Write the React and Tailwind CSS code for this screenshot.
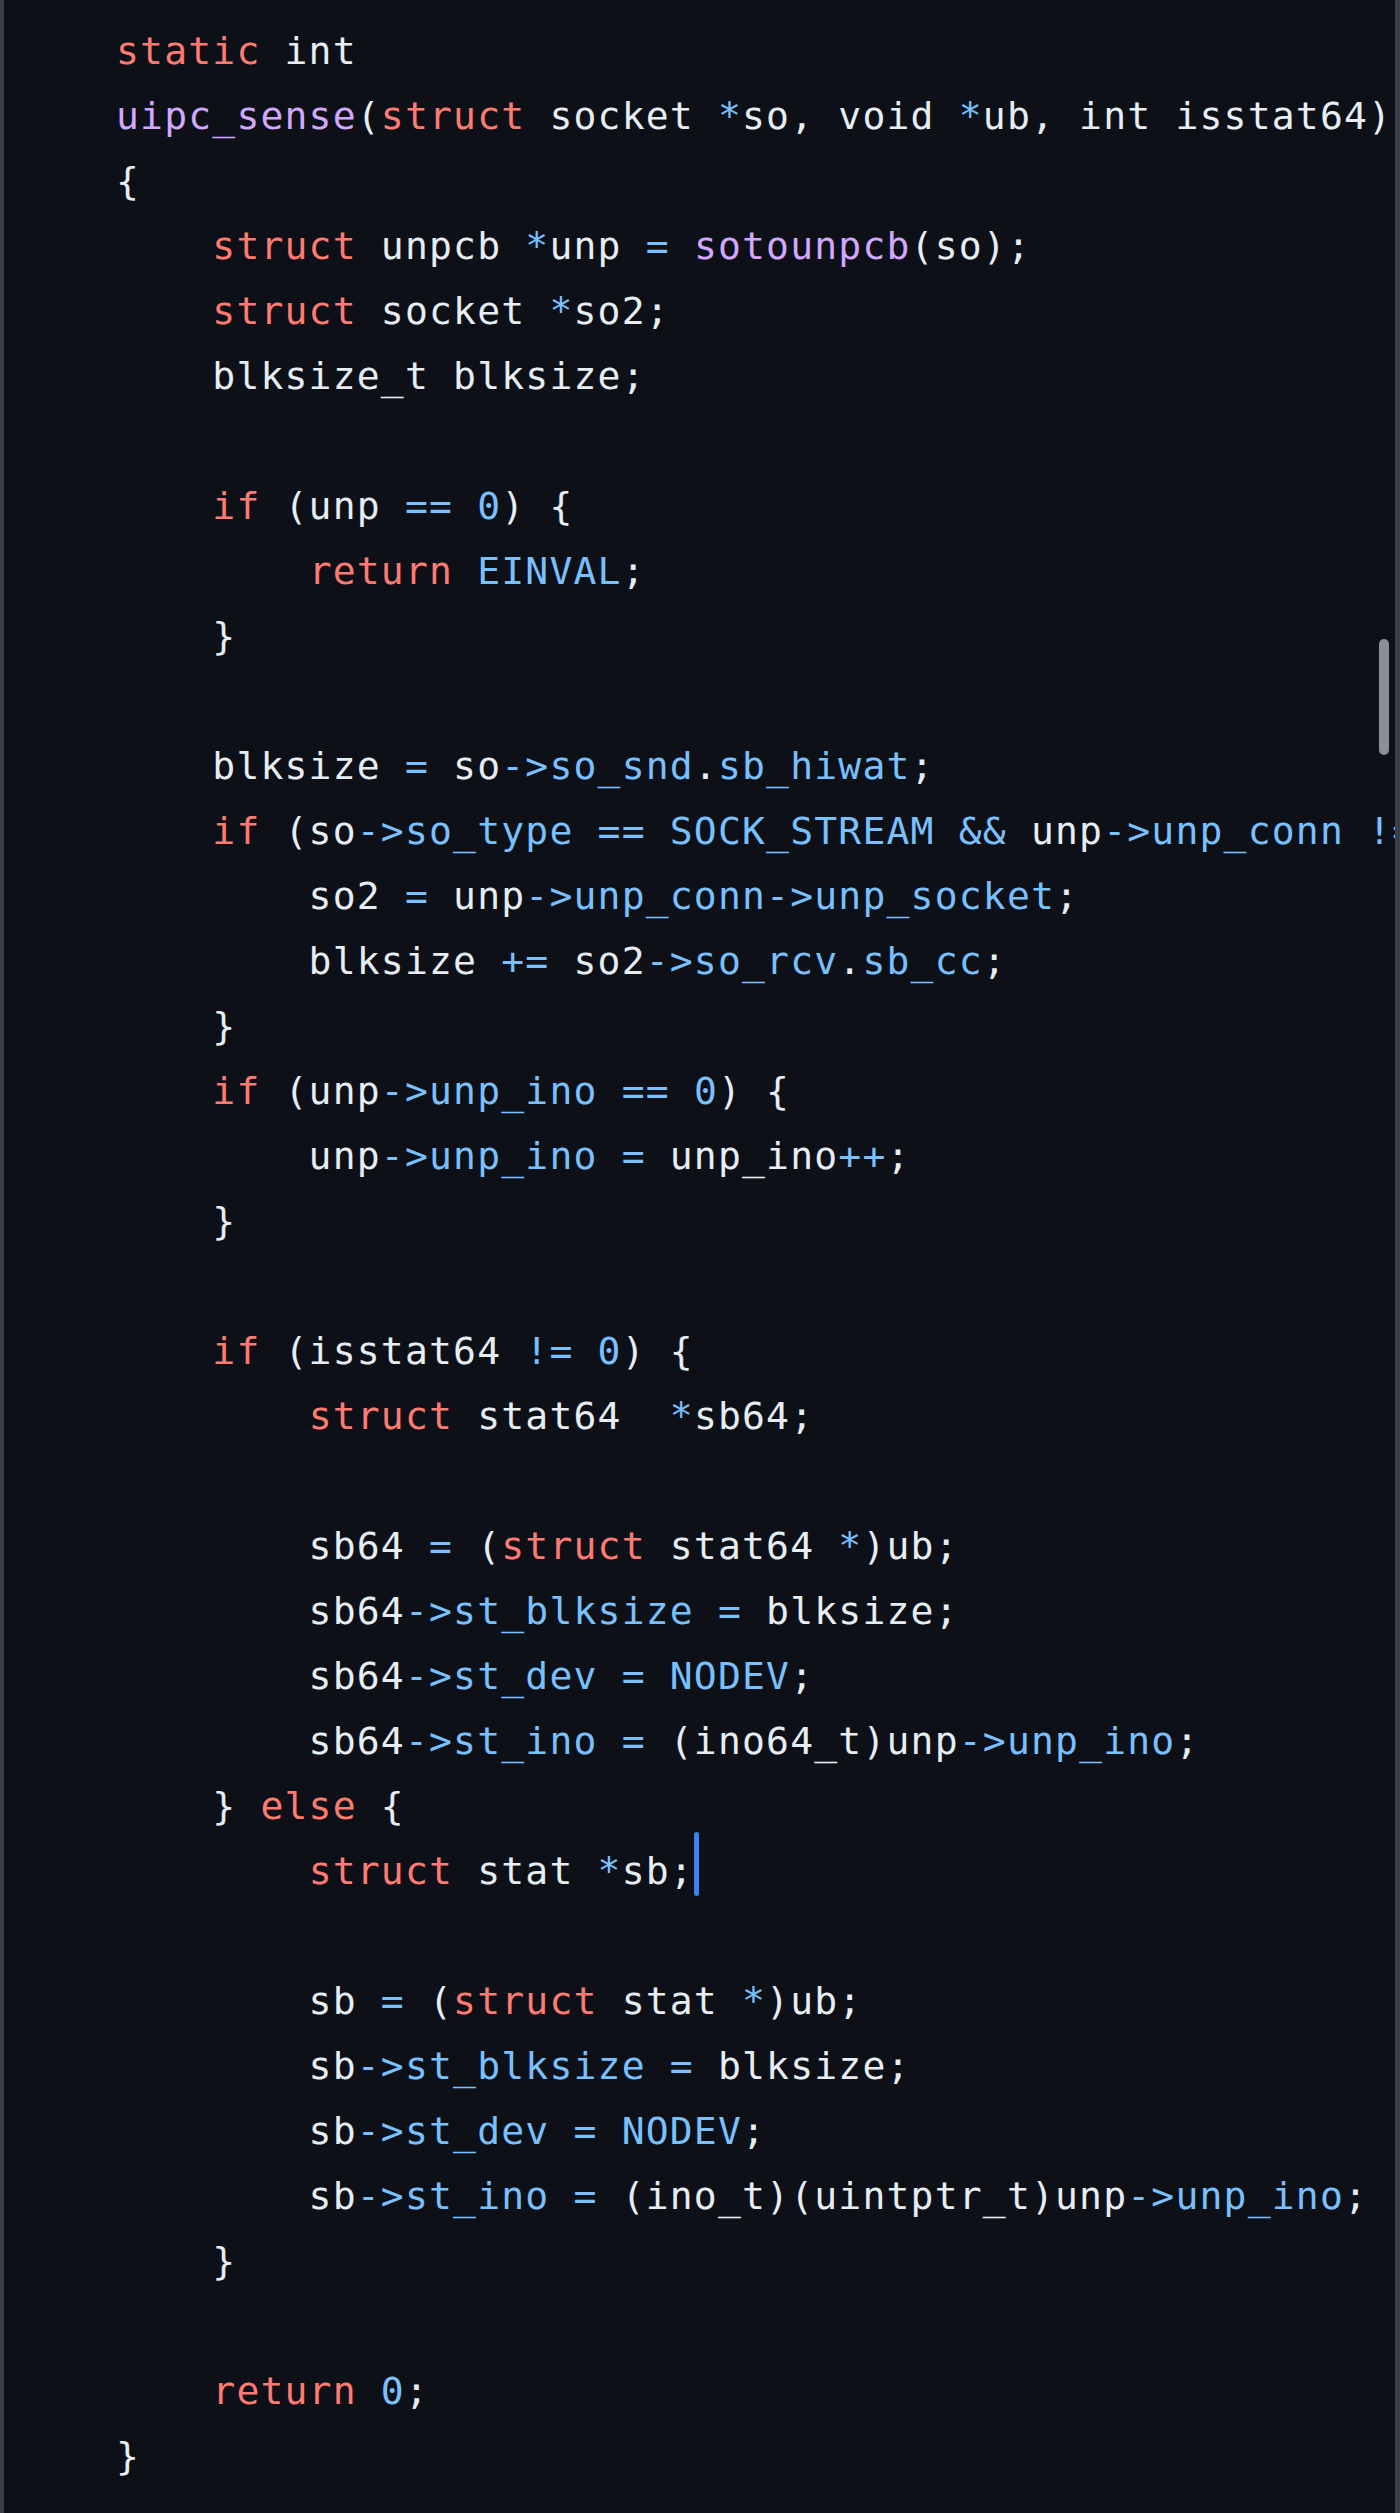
import React from "react";

const K = (t) => ({ t, c: "k" });
const F = (t) => ({ t, c: "f" });
const B = (t) => ({ t, c: "b" });
const CURSOR = { cursor: true };

const lines = [
  [K("static"), " int"],
  [F("uipc_sense"), "(", K("struct"), " socket ", B("*"), "so, void ", B("*"), "ub, int isstat64)"],
  ["{"],
  ["    ", K("struct"), " unpcb ", B("*"), "unp ", B("="), " ", F("sotounpcb"), "(so);"],
  ["    ", K("struct"), " socket ", B("*"), "so2;"],
  ["    blksize_t blksize;"],
  [],
  ["    ", K("if"), " (unp ", B("=="), " ", B("0"), ") {"],
  ["        ", K("return"), " ", B("EINVAL"), ";"],
  ["    }"],
  [],
  ["    blksize ", B("="), " so", B("->so_snd"), ".", B("sb_hiwat"), ";"],
  ["    ", K("if"), " (so", B("->so_type"), " ", B("=="), " ", B("SOCK_STREAM"), " ", B("&&"), " unp", B("->unp_conn"), " ", B("!="), " ", B("0"), ") {"],
  ["        so2 ", B("="), " unp", B("->unp_conn->unp_socket"), ";"],
  ["        blksize ", B("+="), " so2", B("->so_rcv"), ".", B("sb_cc"), ";"],
  ["    }"],
  ["    ", K("if"), " (unp", B("->unp_ino"), " ", B("=="), " ", B("0"), ") {"],
  ["        unp", B("->unp_ino"), " ", B("="), " unp_ino", B("++"), ";"],
  ["    }"],
  [],
  ["    ", K("if"), " (isstat64 ", B("!="), " ", B("0"), ") {"],
  ["        ", K("struct"), " stat64  ", B("*"), "sb64;"],
  [],
  ["        sb64 ", B("="), " (", K("struct"), " stat64 ", B("*"), ")ub;"],
  ["        sb64", B("->st_blksize"), " ", B("="), " blksize;"],
  ["        sb64", B("->st_dev"), " ", B("="), " ", B("NODEV"), ";"],
  ["        sb64", B("->st_ino"), " ", B("="), " (ino64_t)unp", B("->unp_ino"), ";"],
  ["    } ", K("else"), " {"],
  ["        ", K("struct"), " stat ", B("*"), "sb;", CURSOR],
  [],
  ["        sb ", B("="), " (", K("struct"), " stat ", B("*"), ")ub;"],
  ["        sb", B("->st_blksize"), " ", B("="), " blksize;"],
  ["        sb", B("->st_dev"), " ", B("="), " ", B("NODEV"), ";"],
  ["        sb", B("->st_ino"), " ", B("="), " (ino_t)(uintptr_t)unp", B("->unp_ino"), ";"],
  ["    }"],
  [],
  ["    ", K("return"), " ", B("0"), ";"],
  ["}"],
];

function Token({ tok }) {
  if (typeof tok === "string") return <span>{tok}</span>;
  if (tok.cursor)
    return <span className="inline-block w-[5px] h-[64px] mb-[16px] rounded-sm bg-[#3b82f6]" />;
  if (tok.c === "k") return <span className="text-[#ff7b72]">{tok.t}</span>;
  if (tok.c === "f") return <span className="text-[#d2a8ff]">{tok.t}</span>;
  return <span className="text-[#79c0ff]">{tok.t}</span>;
}

export default function App() {
  return (
    <div className="relative w-[1400px] h-[2513px] bg-[#0d1117] border-l-[4px] border-r-[5px] border-[#3b3e46] overflow-hidden">
      <div
        className="h-full overflow-hidden pl-[112px] pt-[19px] text-[38px] tracking-[1.2px] text-[#e6edf3] whitespace-pre"
        style={{ fontFamily: '"DejaVu Sans Mono", "Liberation Mono", monospace' }}
      >
        {lines.map((l, i) => (
          <div key={i} className="flex items-center h-[65px] leading-[65px]">
            {l.map((tok, j) => (
              <Token key={j} tok={tok} />
            ))}
          </div>
        ))}
      </div>
      <div className="absolute left-[1375px] top-[639px] w-[10px] h-[116px] rounded-full bg-[#8b8e95]" />
    </div>
  );
}
